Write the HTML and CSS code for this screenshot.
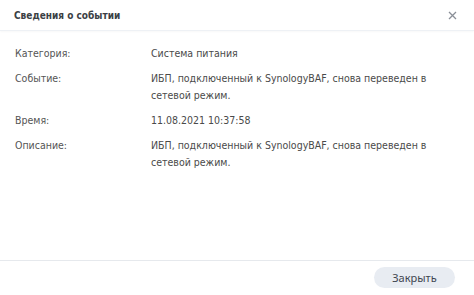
FILE: index.html
```html
<!DOCTYPE html>
<html>
<head>
    <title>Сведения о событии</title>
    <link rel="stylesheet" href="styles.css">
</head>
<body>
    <div class="dialog">
        <div class="dialog-header">
            <span class="dialog-title">Сведения о событии</span>
            <span class="dialog-close">
                <svg width="9" height="9" viewBox="0 0 9 9"><path d="M1 1L8 8M8 1L1 8" stroke="#8a8f97" stroke-width="1.3" fill="none"/></svg>
            </span>
        </div>

        <div class="dialog-body">
            <div class="info-row">
                <div class="info-label">Категория:</div>
                <div class="info-value">Система питания</div>
            </div>
            <div class="info-row">
                <div class="info-label">Событие:</div>
                <div class="info-value">ИБП, подключенный к SynologyBAF, снова переведен в сетевой режим.</div>
            </div>
            <div class="info-row">
                <div class="info-label">Время:</div>
                <div class="info-value">11.08.2021 10:37:58</div>
            </div>
            <div class="info-row">
                <div class="info-label">Описание:</div>
                <div class="info-value">ИБП, подключенный к SynologyBAF, снова переведен в сетевой режим.</div>
            </div>
        </div>

        <div class="dialog-footer">
            <button type="button" class="btn-close">Закрыть</button>
        </div>
    </div>
</body>
</html>
```

FILE: styles.css
```css
html, body {
    margin: 0;
    padding: 0;
    background-color: white;
}
body {
    font-family: 'DejaVu Sans Condensed', 'DejaVu Sans', sans-serif;
    font-size: 10.5px;
    color: #4a4a4a;
}
.dialog {
    width: 474px;
    height: 295px;
    display: flex;
    flex-direction: column;
}
.dialog-header {
    height: 30px;
    display: flex;
    align-items: center;
    justify-content: space-between;
    padding: 0 17px 0 14px;
    border-bottom: 1px solid #eef1f5;
    box-shadow: 0 1px 2px rgba(0,0,0,0.03);
}
.dialog-title {
    font-weight: bold;
    color: #3b3f45;
    font-size: 10px;
}
.dialog-close {
    display: flex;
}
.dialog-body {
    flex: 1;
    padding: 14px 15px 0 15px;
    display: flex;
    flex-direction: column;
    gap: 8px;
}
.info-row {
    display: flex;
    line-height: 17px;
}
.info-label {
    width: 136px;
    flex-shrink: 0;
    color: #555;
}
.info-value {
    width: 292px;
    color: #4a4a4a;
}
.dialog-footer {
    height: 33px;
    border-top: 1px solid #e6e9ed;
    display: flex;
    align-items: center;
    justify-content: flex-end;
    padding: 0 19px 1px 0;
}
.btn-close {
    font-family: 'Noto Sans', sans-serif;
    font-size: 11px;
    color: #3f4650;
    background-color: #e8ecf2;
    border: none;
    border-radius: 11px;
    width: 81px;
    height: 21px;
    padding: 0;
}
```
